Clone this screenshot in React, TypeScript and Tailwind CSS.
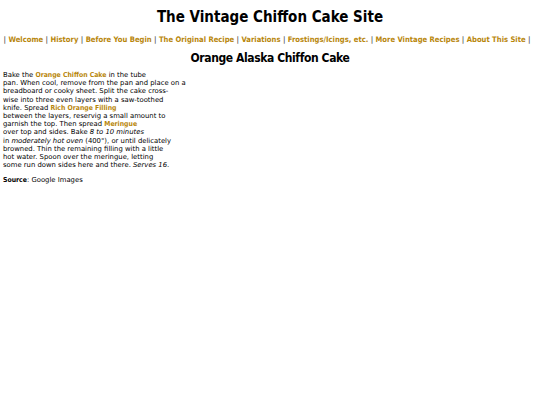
const NAV = [
  "Welcome",
  "History",
  "Before You Begin",
  "The Original Recipe",
  "Variations",
  "Frostings/Icings, etc.",
  "More Vintage Recipes",
  "About This Site",
];

const bold = "font-['DejaVu_Sans_Condensed',sans-serif] font-bold";

function Gold({ children }: { children: React.ReactNode }) {
  return <a className={`${bold} text-[#b8860b] no-underline`}>{children}</a>;
}

export default function App() {
  return (
    <div className="min-h-[405px] bg-white text-black font-['DejaVu_Sans',Verdana,sans-serif]">
      <h1 className={`${bold} pt-[8px] text-center text-[15px] leading-[18px]`}>
        The Vintage Chiffon Cake Site
      </h1>

      <p className={`${bold} mt-[9px] pr-[6px] text-center text-[7.6px] leading-[9px] text-[#555]`}>
        |{" "}
        {NAV.map((n) => (
          <span key={n}>
            <a className="text-[#b8860b]">{n}</a> |{" "}
          </span>
        ))}
      </p>

      <h2 className={`${bold} mt-[7px] text-center text-[12px] leading-[15px] tracking-[-0.4px]`}>
        Orange Alaska Chiffon Cake
      </h2>

      <div className="mt-[5px] px-[3px] text-[6.85px] leading-[8.2px]">
        <p>
          Bake the <Gold>Orange Chiffon Cake</Gold> in the tube
          <br />
          pan. When cool, remove from the pan and place on a
          <br />
          breadboard or cooky sheet. Split the cake cross-
          <br />
          wise into three even layers with a saw-toothed
          <br />
          knife. Spread <Gold>Rich Orange Filling</Gold>
          <br />
          between the layers, reservig a small amount to
          <br />
          garnish the top. Then spread <Gold>Meringue</Gold>
          <br />
          over top and sides. Bake <i>8 to 10 minutes</i>
          <br />
          in <i>moderately hot oven</i> (400°), or until delicately
          <br />
          browned. Thin the remaining filling with a little
          <br />
          hot water. Spoon over the meringue, letting
          <br />
          some run down sides here and there. <i>Serves 16</i>.
        </p>
        <p className="mt-[7px]">
          <b className={bold}>Source</b>: Google Images
        </p>
      </div>
    </div>
  );
}
